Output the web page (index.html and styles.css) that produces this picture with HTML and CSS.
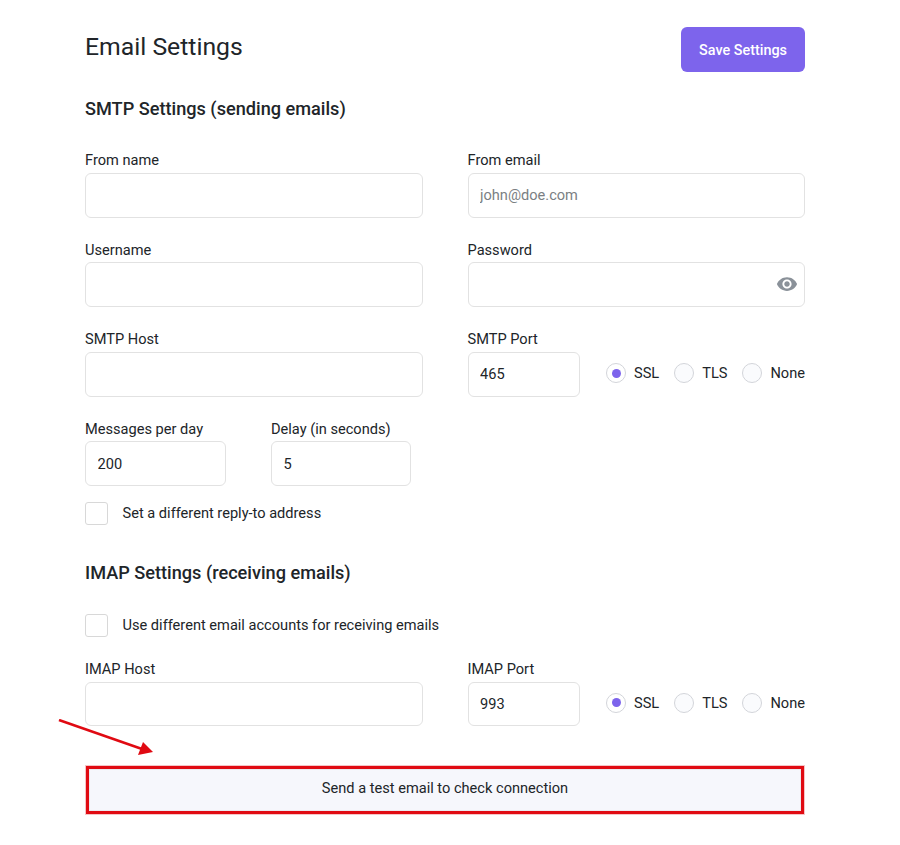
FILE: index.html
```html
<!DOCTYPE html>
<html lang="en">
<head>
<meta charset="utf-8">
<title>Email Settings</title>
<link rel="stylesheet" href="styles.css">
</head>
<body>
<main class="page">
  <header class="top">
    <h1 class="title">Email Settings</h1>
    <button class="save" type="button">Save Settings</button>
  </header>
  <h2 class="section smtp">SMTP Settings (sending emails)</h2>
  <div class="grid">
    <div class="field"><label class="label">From name</label><input class="input" type="text"></div>
    <div class="field"><label class="label">From email</label><input class="input" type="text" placeholder="john@doe.com"></div>
    <div class="field"><label class="label">Username</label><input class="input" type="text"></div>
    <div class="field"><label class="label">Password</label>
      <div class="pw"><input class="input" type="text">
        <svg class="eye" viewBox="0 0 24 24" aria-hidden="true"><path d="M12 4.5C7 4.5 2.73 7.61 1 12c1.73 4.39 6 7.5 11 7.5s9.27-3.11 11-7.5c-1.73-4.39-6-7.5-11-7.5zM12 17c-2.76 0-5-2.24-5-5s2.24-5 5-5 5 2.24 5 5-2.24 5-5 5zm0-8c-1.66 0-3 1.34-3 3s1.34 3 3 3 3-1.34 3-3-1.34-3-3-3z"/></svg>
      </div>
    </div>
    <div class="field"><label class="label">SMTP Host</label><input class="input" type="text"></div>
    <div class="field"><label class="label">SMTP Port</label>
      <div class="port-row">
        <input class="input port" type="text" value="465">
        <div class="radios">
          <span class="radio-item"><span class="radio on"></span>SSL</span>
          <span class="radio-item"><span class="radio"></span>TLS</span>
          <span class="radio-item"><span class="radio"></span>None</span>
        </div>
      </div>
    </div>
    <div class="pair">
      <div class="field"><label class="label">Messages per day</label><input class="input" type="text" value="200"></div>
      <div class="field"><label class="label">Delay (in seconds)</label><input class="input" type="text" value="5"></div>
    </div>
  </div>
  <div class="check-row reply"><span class="check"></span><span class="check-text">Set a different reply-to address</span></div>
  <h2 class="section imap">IMAP Settings (receiving emails)</h2>
  <div class="check-row use"><span class="check"></span><span class="check-text">Use different email accounts for receiving emails</span></div>
  <div class="grid">
    <div class="field"><label class="label">IMAP Host</label><input class="input short" type="text"></div>
    <div class="field"><label class="label">IMAP Port</label>
      <div class="port-row">
        <input class="input port short" type="text" value="993">
        <div class="radios">
          <span class="radio-item"><span class="radio on"></span>SSL</span>
          <span class="radio-item"><span class="radio"></span>TLS</span>
          <span class="radio-item"><span class="radio"></span>None</span>
        </div>
      </div>
    </div>
  </div>
  <button class="test" type="button">Send a test email to check connection</button>
</main>
<svg class="arrow" viewBox="0 0 100 40" aria-hidden="true">
  <line x1="1" y1="1" x2="84" y2="30" stroke="#e00a12" stroke-width="2.6"/>
  <polygon points="95,33 80,36 85,23" fill="#e00a12"/>
</svg>
</body>
</html>
```
FILE: styles.css
```css
* { box-sizing: border-box; }
html, body { margin: 0; padding: 0; background: #fff; }
body {
  font-family: Roboto, "Liberation Sans", sans-serif;
  color: #212529;
  height: 845px;
  overflow: hidden;
  position: relative;
}
.page { width: 720px; margin-left: 85px; padding-top: 27px; }
.top { display: flex; justify-content: space-between; align-items: flex-start; height: 45px; }
.title { margin: 0; font-size: 24.75px; font-weight: 400; line-height: 39px; color: #212529; }
.save {
  width: 124px; height: 45px; border: 0; border-radius: 6px; padding: 3px 0 0;
  background: #7d64ec; color: #fff;
  font: 500 14.4px/1 Roboto, sans-serif;
}
.section { margin: 0; font-size: 18.15px; font-weight: 500; line-height: 24px; color: #212529; }
.smtp { margin-top: 25px; margin-bottom: 30px; }
.imap { margin-top: 36px; margin-bottom: 29px; }
.grid { display: grid; grid-template-columns: 337.5px 337.5px; column-gap: 45px; row-gap: 23px; }
.field { display: flex; flex-direction: column; min-width: 0; }
.label { font-size: 14.6px; line-height: 19px; margin-bottom: 2.5px; color: #212529; }
.input {
  display: block; width: 100%; height: 45px; padding: 0 11.5px;
  border: 1px solid #e2e2e2; border-radius: 6px; background: #fff;
  font: 400 14.6px Roboto, sans-serif; color: #212529; outline: 0;
}
.input.short { height: 44px; }
.input::placeholder { color: #7b7f83; opacity: 1; }
.pw { position: relative; }
.eye { position: absolute; right: 7px; top: 11px; width: 22px; height: 22px; fill: #8a9199; }
.port-row { display: flex; align-items: center; justify-content: space-between; }
.port { width: 112px; flex: none; }
.radios { display: flex; gap: 15px; margin-bottom: 2px; font-size: 14.6px; color: #212529; }
.radio-item { display: flex; align-items: center; gap: 8px; }
.radio {
  width: 20px; height: 20px; border-radius: 50%;
  border: 1px solid #d3d5da; background: #fafbfd;
  display: flex; align-items: center; justify-content: center;
}
.radio.on { background: #fff; }
.radio.on::after { content: ""; width: 9px; height: 9px; border-radius: 50%; background: #7d64ec; }
.pair { display: grid; grid-template-columns: 141px 140px; column-gap: 45px; }
.check-row { display: flex; align-items: center; gap: 14.5px; font-size: 14.6px; height: 23px; }
.check-text { margin-bottom: 2px; }
.reply { margin-top: 16px; }
.check { width: 23px; height: 23px; border: 1px solid #d8d8d8; border-radius: 3px; background: #fff; flex: none; }
.use { margin-bottom: 23px; }
.test {
  display: block; width: 718px; height: 48px; margin: 40px 0 0 1px; padding: 0 0 4px;
  border: 3px solid #e00a12;
  box-shadow: 0 0 0 1px #f6c4c6, inset 0 0 0 1px #e9e9ef;
  background: #f6f7fc; color: #212529;
  font: 400 14.6px Roboto, sans-serif;
}
.arrow { position: absolute; left: 58px; top: 719px; width: 100px; height: 40px; }
```
